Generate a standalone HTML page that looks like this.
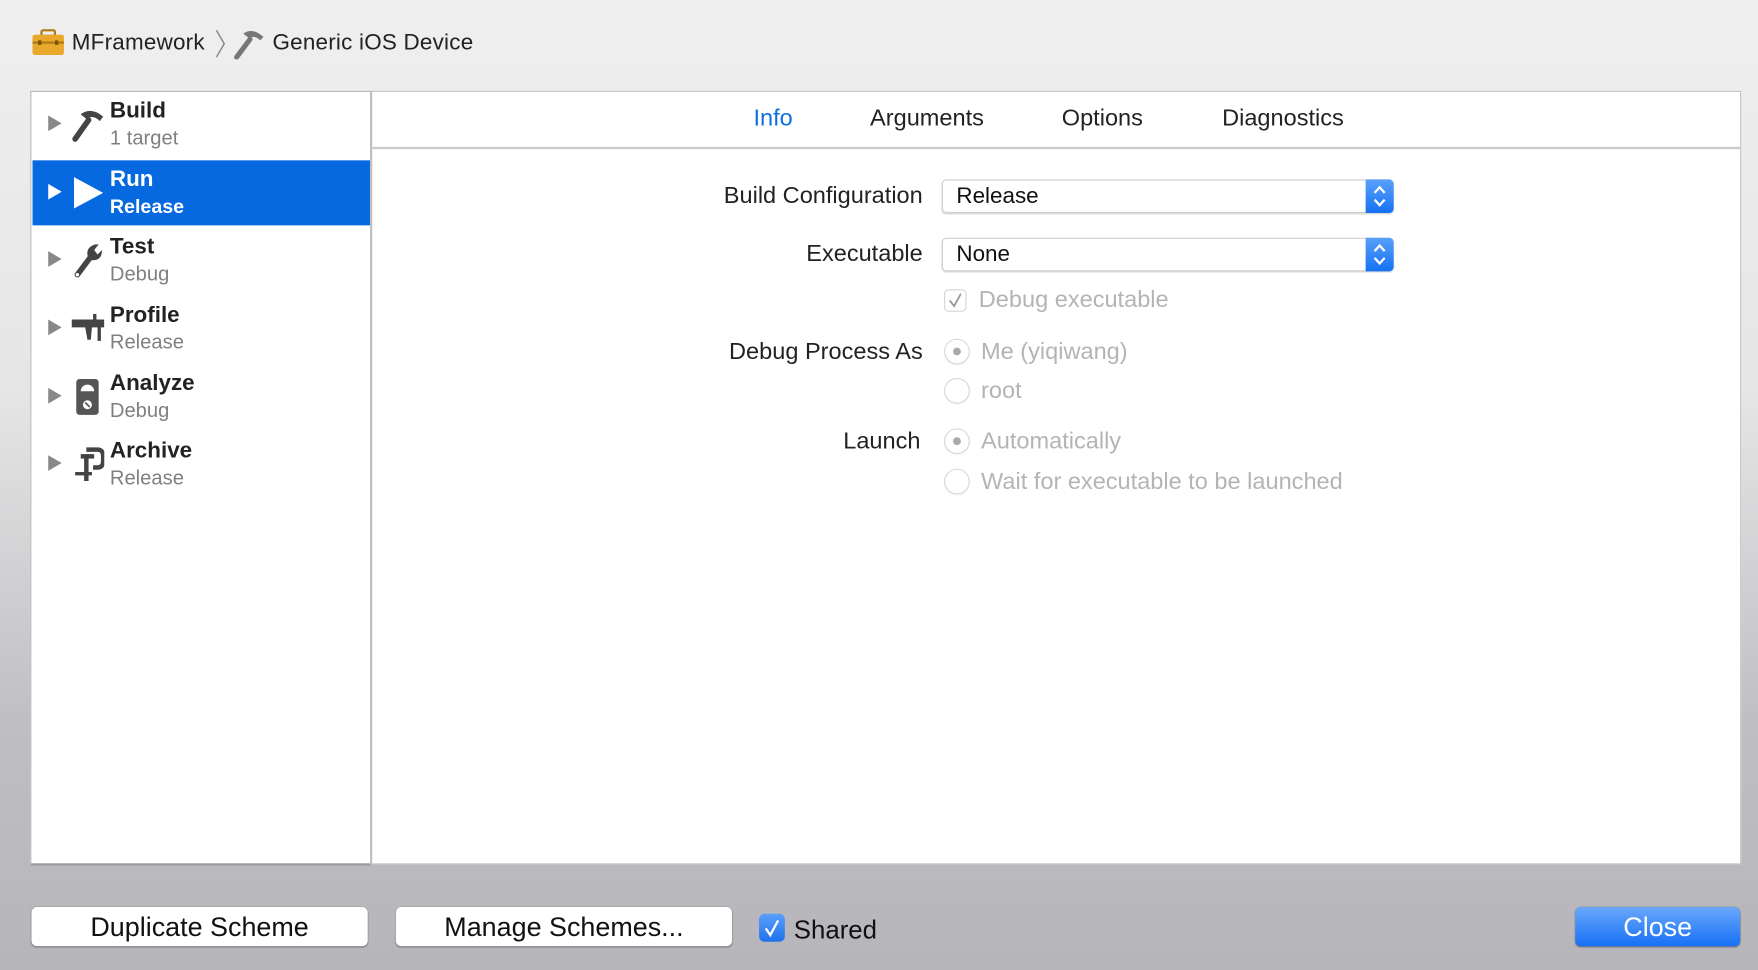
<!DOCTYPE html>
<html><head><meta charset="utf-8"><style>
*{margin:0;padding:0;box-sizing:border-box}
html,body{width:1758px;height:970px;overflow:hidden}
body{background:linear-gradient(180deg,#efefef 0%,#e6e6e7 40%,#bfbfc2 75%,#b6b6ba 100%);font-family:"Liberation Sans",sans-serif}
#w{position:absolute;left:0;top:0;width:1568px;height:865px;transform:scale(1.1212);transform-origin:0 0}
.a{position:absolute;white-space:nowrap}
.panel{position:absolute;background:#fff}
.row{position:absolute;left:29px;width:301px;height:60px}
.tri{position:absolute;left:14px;top:21px;width:0;height:0;border-left:12px solid #888;border-top:7px solid transparent;border-bottom:7px solid transparent}
.t1{position:absolute;left:69px;top:6px;font-size:20px;font-weight:bold;color:#222}
.t2{position:absolute;left:69px;top:31px;font-size:18px;color:#808080}
.ic{position:absolute;left:34px;top:12px}
.lbl{position:absolute;font-size:21px;color:#222;text-align:right;width:320px}
.pop{position:absolute;left:840px;width:403px;height:30px;background:#fff;border:1px solid #cfcfcf;border-radius:4px;box-shadow:0 1px 1px rgba(0,0,0,.15);font-size:20px;color:#111;padding:3px 0 0 12px}
.pop b{position:absolute;right:-1px;top:-1px;width:25px;height:30px;background:linear-gradient(#5aa0fb,#1572f4);border-radius:0 4px 4px 0}
.dis{color:#b4b4b4;font-size:21px}
.rad{position:absolute;width:23px;height:23px;border-radius:50%;border:1px solid #d8d8d8;background:#fff;box-shadow:0 1px 1px rgba(0,0,0,.05)}
.rad.on:after{content:"";position:absolute;left:7px;top:7px;width:7px;height:7px;border-radius:50%;background:#aaa}
.btn{position:absolute;top:809px;height:35px;background:#fff;border-radius:5px;box-shadow:0 1px 1px rgba(0,0,0,.3),0 0 0 .5px rgba(0,0,0,.15);font-size:24px;color:#111;text-align:center;line-height:37px}
.tab{position:absolute;top:94px;font-size:21px;color:#222}
</style></head><body><div id="w">
<svg class="a" style="left:28px;top:26px" width="30" height="24" viewBox="0 0 30 24"><rect x="9" y="1" width="12" height="5" rx="1.5" fill="none" stroke="#b07a12" stroke-width="2"/><rect x="1" y="5" width="28" height="18" rx="2" fill="#e8a92a"/><rect x="1" y="11" width="28" height="2" fill="#b07a12"/><rect x="6" y="10" width="3" height="4" fill="#7a5208"/><rect x="21" y="10" width="3" height="4" fill="#7a5208"/></svg>
<div class="a" style="left:64px;top:27px;font-size:20px;color:#222;letter-spacing:.2px">MFramework</div>
<svg class="a" style="left:191px;top:26px" width="12" height="26"><path d="M2 1 L9 13 L2 25" fill="none" stroke="#888" stroke-width="1.3"/></svg>
<svg class="a" style="left:208px;top:25px" width="30" height="28" viewBox="0 0 30 28"><path d="M3 26 L15 10" stroke="#777" stroke-width="4.5" stroke-linecap="round"/><path d="M9 5 Q17 -1 27 8 L24 11 Q19 6 14 9 Z" fill="#777"/></svg>
<div class="a" style="left:243px;top:27px;font-size:20px;color:#222;letter-spacing:.2px">Generic iOS Device</div>
<div class="panel" style="left:27px;top:81px;width:305px;height:691px;border:1px solid #b9b9b9;border-bottom:2px solid #9a9a9a"></div>
<div class="panel" style="left:330px;top:81px;width:1223px;height:690px;border:1px solid #c4c4c4;border-left:2px solid #c0c0c0"></div>
<div class="a" style="left:332px;top:131px;width:1220px;height:2px;background:#cacaca"></div>
<div class="tab" style="left:672px;color:#0e6fe0">Info</div>
<div class="tab" style="left:776px">Arguments</div>
<div class="tab" style="left:947px">Options</div>
<div class="tab" style="left:1090px">Diagnostics</div>
<div class="row" style="top:82px"><div class="tri"></div>
<svg class="ic" width="30" height="34" viewBox="0 0 30 34"><path d="M4 30 L16 13" stroke="#444" stroke-width="5" stroke-linecap="round"/><path d="M9 8 Q18 1 29 10 L26 14 Q20 8 14 12 Z" fill="#444"/></svg>
<div class="t1">Build</div><div class="t2">1 target</div></div>
<div class="row" style="top:143px;height:58px;background:#0769e0"><div class="tri" style="border-left-color:#fff"></div>
<svg class="ic" width="30" height="34"><path d="M3 3 L29 17 L3 31 Z" fill="#fff"/></svg>
<div class="t1" style="color:#fff">Run</div><div class="t2" style="color:#fff;font-weight:bold;font-size:17.5px">Release</div></div>
<div class="row" style="top:203px"><div class="tri"></div>
<svg class="ic" width="30" height="34" viewBox="0 0 30 34"><path d="M6 30 L18 14" stroke="#444" stroke-width="5" stroke-linecap="round"/><path d="M16 16 Q12 6 22 3 L25 3 L21 8 L24 12 L28 8 Q28 18 18 17 Z" fill="#444"/><circle cx="6" cy="30" r="1.5" fill="#fff"/></svg>
<div class="t1">Test</div><div class="t2">Debug</div></div>
<div class="row" style="top:264px"><div class="tri"></div>
<svg class="ic" width="30" height="34" viewBox="0 0 30 34"><path d="M1 9 L30 9 L30 16 L27 16 L27 28 L24 28 L24 16 L19 16 L18 27 L15 27 L13 16 L1 16 Z" fill="#444"/><rect x="20" y="4" width="3" height="6" fill="#444"/></svg>
<div class="t1">Profile</div><div class="t2">Release</div></div>
<div class="row" style="top:325px"><div class="tri"></div>
<svg class="ic" width="30" height="34" viewBox="0 0 30 34"><rect x="5" y="1" width="20" height="32" rx="3" fill="#555"/><path d="M9 12 A6 6 0 0 1 21 12 Z" fill="#fff"/><circle cx="15" cy="24" r="4" fill="#fff"/><path d="M13 22 L17 26" stroke="#555" stroke-width="1.5"/></svg>
<div class="t1">Analyze</div><div class="t2">Debug</div></div>
<div class="row" style="top:385px"><div class="tri"></div>
<svg class="ic" width="30" height="34" viewBox="0 0 30 34"><path d="M14 4 L24 4 Q29 4 29 10 L29 14 Q29 20 24 20 L20 20" fill="none" stroke="#444" stroke-width="4"/><rect x="9" y="8" width="12" height="4" fill="#444"/><rect x="12" y="10" width="4" height="22" fill="#444"/><rect x="4" y="24" width="15" height="3" fill="#444"/></svg>
<div class="t1">Archive</div><div class="t2">Release</div></div>
<div class="lbl" style="left:503px;top:163px">Build Configuration</div>
<div class="pop" style="top:160px">Release<b><svg width="25" height="30"><path d="M8 12 L12.5 7 L17 12 M8 18 L12.5 23 L17 18" fill="none" stroke="#fff" stroke-width="2"/></svg></b></div>
<div class="lbl" style="left:503px;top:215px">Executable</div>
<div class="pop" style="top:212px">None<b><svg width="25" height="30"><path d="M8 12 L12.5 7 L17 12 M8 18 L12.5 23 L17 18" fill="none" stroke="#fff" stroke-width="2"/></svg></b></div>
<div class="a" style="left:842px;top:258px;width:20px;height:20px;border:1px solid #d4d4d4;border-radius:4px;background:#fff"><svg width="20" height="20" style="position:absolute;left:-1px;top:-1px"><path d="M5 10 L9 15 L15 4" fill="none" stroke="#999" stroke-width="1.6"/></svg></div>
<div class="a dis" style="left:873px;top:256px">Debug executable</div>
<div class="lbl" style="left:503px;top:302px">Debug Process As</div>
<div class="rad on" style="left:842px;top:302px"></div>
<div class="a dis" style="left:875px;top:302px">Me (yiqiwang)</div>
<div class="rad" style="left:842px;top:337px"></div>
<div class="a dis" style="left:875px;top:337px">root</div>
<div class="lbl" style="left:501px;top:382px">Launch</div>
<div class="rad on" style="left:842px;top:382px"></div>
<div class="a dis" style="left:875px;top:382px">Automatically</div>
<div class="rad" style="left:842px;top:418px"></div>
<div class="a dis" style="left:875px;top:418px">Wait for executable to be launched</div>
<div class="btn" style="left:28px;width:300px">Duplicate Scheme</div>
<div class="btn" style="left:353px;width:300px">Manage Schemes...</div>
<div class="a" style="left:677px;top:815px;width:23px;height:25px;border-radius:5px;background:linear-gradient(#5a9ff9,#1f72ee)"><svg width="23" height="25"><path d="M6 13 L10 19 L17 6" fill="none" stroke="#fff" stroke-width="2"/></svg></div>
<div class="a" style="left:708px;top:816px;font-size:23px;color:#111">Shared</div>
<div class="btn" style="left:1405px;width:147px;background:linear-gradient(#6aa8fb,#1670f5);color:#fff">Close</div>
</div></body></html>
